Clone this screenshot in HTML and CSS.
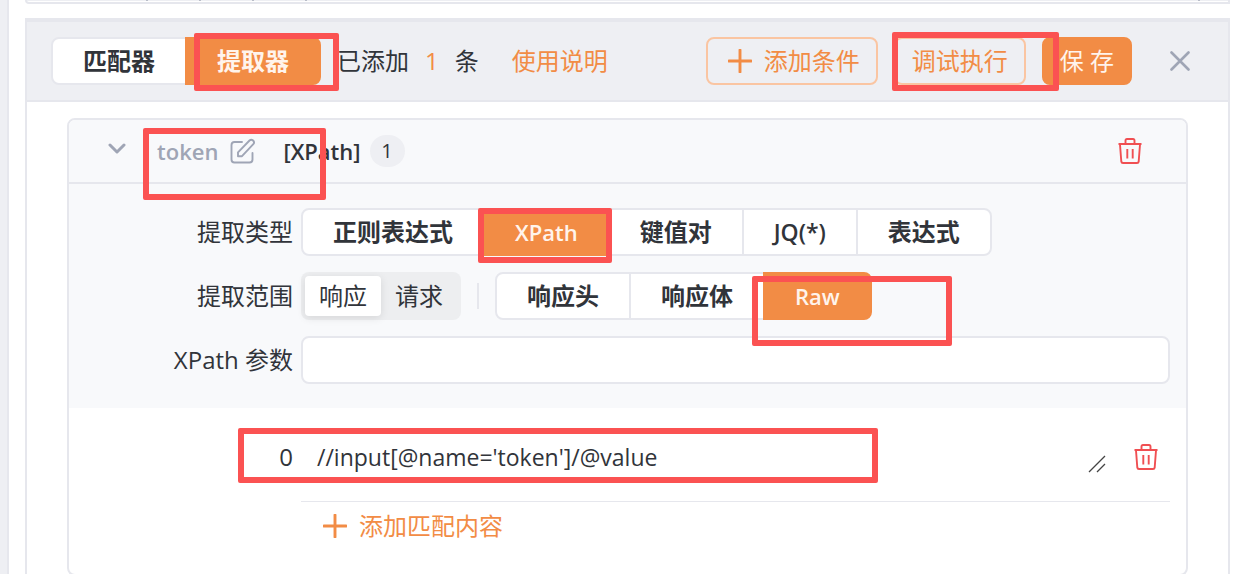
FILE: index.html
```html
<!DOCTYPE html>
<html lang="zh-CN">
<head>
<meta charset="utf-8">
<title>提取器</title>
<link rel="stylesheet" href="styles.css">
</head>
<body>
<svg class="sprite" aria-hidden="true">
  <symbol id="trash" viewBox="0 0 24 26"><path d="M7.5 5.5V2.6Q7.5 1 9 1h6q1.500 0 1.500 1.600v2.900M.5 6h23M2 6.500l1.300 17Q3.500 25 5 25h14q1.500 0 1.700-1.500L22 6.500M9.300 11v9.500M14.700 11v9.500" fill="none" stroke="currentColor" stroke-width="1.900"/></symbol>
  <symbol id="plus" viewBox="0 0 24 24"><path d="M12 1v22M1 12h22" fill="none" stroke="currentColor" stroke-width="2.900" stroke-linecap="round"/></symbol>
</svg>
<div class="page">
  <aside class="rail"></aside>
  <main class="main">
    <div class="previous"><i class="tick"></i><i class="tick"></i><i class="tick"></i><i class="tick"></i><i class="tick tick-last"></i></div>
    <section class="panel">
      <header class="toolbar">
        <div class="group">
          <button class="tab" type="button">匹配器</button>
          <button class="tab tab-on" type="button">提取器<span class="mark mark-tab"></span></button>
        </div>
        <div class="count"><span>已添加</span><span class="accent">1</span><span>条</span></div>
        <a class="help" href="#">使用说明</a>
        <div class="actions">
          <button class="btn" type="button"><span class="plus-box"><svg class="plus"><use href="#plus"/></svg></span>添加条件</button>
          <button class="btn" type="button">调试执行<span class="mark mark-debug"></span></button>
          <button class="btn btn-primary" type="button">保 存</button>
        </div>
        <button class="icon-btn close" type="button" aria-label="关闭"><svg class="close-icon" viewBox="0 0 20 20"><path d="M1.500 1.500l17 17M18.500 1.500l-17 17" fill="none" stroke="currentColor" stroke-width="2.600" stroke-linecap="round"/></svg></button>
      </header>
      <article class="card">
        <header class="card-head">
          <button class="icon-btn" type="button" aria-label="折叠"><svg class="chevron" viewBox="0 0 18 12"><path d="M2 2l7 7 7-7" fill="none" stroke="currentColor" stroke-width="3" stroke-linecap="round" stroke-linejoin="round"/></svg></button>
          <div class="name"><span>token</span>
            <button class="icon-btn" type="button" aria-label="编辑"><svg class="edit" viewBox="0 0 26 26"><path d="M12 4H4.500Q1.500 4 1.500 7v14.500q0 3 3 3h15q3 0 3-3V15M8 18.300v-4L19.500 2.500q1.700-1.600 3.600 0 1.800 2 .2 3.700L12 18.200z" fill="none" stroke="currentColor" stroke-width="1.900" stroke-linecap="round" stroke-linejoin="round"/></svg></button>
            <span class="mark mark-name"></span>
          </div>
          <span class="kind">[XPath]</span>
          <span class="badge">1</span>
          <button class="icon-btn danger head-del" type="button" aria-label="删除"><svg class="trash"><use href="#trash"/></svg></button>
        </header>
        <div class="settings">
          <div class="row">
            <span class="label">提取类型</span>
            <div class="group">
              <button class="tab" type="button">正则表达式</button>
              <button class="tab tab-on tab-latin" type="button">XPath<span class="mark mark-xpath"></span></button>
              <button class="tab" type="button">键值对</button>
              <button class="tab tab-jq" type="button">JQ(*)</button>
              <button class="tab" type="button">表达式</button>
            </div>
          </div>
          <div class="row">
            <span class="label">提取范围</span>
            <div class="segment">
              <button class="seg seg-on" type="button">响应</button>
              <button class="seg" type="button">请求</button>
            </div>
            <span class="divider"></span>
            <div class="group">
              <button class="tab" type="button">响应头</button>
              <button class="tab" type="button">响应体</button>
              <button class="tab tab-on tab-latin" type="button">Raw<span class="mark mark-raw"></span></button>
            </div>
          </div>
          <div class="row">
            <label class="label" for="params">XPath 参数</label>
            <input class="field" id="params" type="text">
          </div>
        </div>
        <div class="items">
          <div class="item">
            <label class="label" for="expr">0</label>
            <div class="item-body">
              <div class="expr-box">
                <textarea class="expr" id="expr" rows="1">//input[@name='token']/@value</textarea>
                <svg class="grip" viewBox="0 0 18 18"><path d="M1 17L17 1M9 17l8-8" fill="none" stroke="#444" stroke-width="1.300"/></svg>
              </div>
              <button class="icon-btn danger" type="button" aria-label="删除"><svg class="trash"><use href="#trash"/></svg></button>
            </div>
            <span class="mark mark-expr"></span>
          </div>
          <button class="add" type="button"><svg class="plus"><use href="#plus"/></svg>添加匹配内容</button>
        </div>
      </article>
    </section>
  </main>
</div>
</body>
</html>
```
FILE: styles.css
```css
* { box-sizing: border-box; }

:root {
  --orange: #f28c45;
  --line: #e6e7ed;
  --muted: #9fa5b5;
  --text: #31343a;
  --soft: #f8f9fb;
}

body {
  margin: 0;
  overflow: hidden;
  background: #fff;
  color: var(--text);
  font: 24px/32px "Open Sans", "Noto Sans CJK SC", sans-serif;
}

button, input, textarea { font: inherit; color: inherit; }
button { margin: 0; padding: 0; border: 0; background: none; white-space: nowrap; }
svg { display: block; }
.sprite { position: absolute; width: 0; height: 0; }

.page { display: flex; height: 100vh; }
.rail { flex: none; width: 9px; background: #eeeff3; border-right: 2px solid var(--line); }
.main { flex: 1; min-width: 0; padding: 0 22px 0 16px; }

.previous {
  display: flex;
  gap: 51px;
  height: 4px;
  margin-bottom: 14px;
  padding: 0 28px 0 119px;
  border: 2px solid var(--line);
  border-top: 0;
  border-radius: 0 0 0 8px;
  box-shadow: inset 0 1px #eeeff3;
}
.tick { width: 2px; height: 1px; background: #b9bdc8; }
.tick-last { margin-left: auto; }

.panel { border: 2px solid var(--line); border-top-width: 4px; padding-bottom: 16px; }

.toolbar {
  display: flex;
  align-items: center;
  height: 80px;
  padding: 0 38px 0 24px;
  background: #eeeff3;
  border-bottom: 2px solid var(--line);
}

.group { display: flex; }
.tab {
  position: relative;
  height: 48px;
  padding: 0 30px;
  background: #fff;
  border: 2px solid var(--line);
  font-weight: 700;
}
.tab + .tab { margin-left: -2px; }
.tab:first-child { border-radius: 8px 0 0 8px; }
.tab:last-child { border-radius: 0 8px 8px 0; }
.tab-on { z-index: 1; background: var(--orange); border-color: var(--orange); color: #fff4ec; }
.tab-latin { font-size: 22px; font-weight: 600; }
.tab-jq { font-size: 23px; font-weight: 600; }

.count { display: flex; gap: 16px; margin-left: 16px; }
.accent { color: var(--orange); }
.help { margin-left: 33px; color: var(--orange); text-decoration: none; }

.actions { display: flex; gap: 16px; margin-left: auto; }
.btn {
  position: relative;
  display: flex;
  align-items: center;
  gap: 8px;
  height: 48px;
  padding: 0 16px;
  border: 2px solid #fac5a2;
  border-radius: 8px;
  color: var(--orange);
}
.btn-primary { background: var(--orange); border-color: var(--orange); color: #fff4ec; }
.plus-box { display: flex; justify-content: center; width: 32px; }
.plus { width: 24px; height: 24px; }
.icon-btn { flex: none; color: var(--muted); }
.close { margin-left: 38px; }
.close-icon { width: 20px; height: 20px; }

.card {
  margin: 16px 40px 0;
  border: 2px solid var(--line);
  border-radius: 8px;
}
.card-head {
  display: flex;
  align-items: center;
  height: 64px;
  padding: 0 44px 0 39px;
  background: var(--soft);
  border-bottom: 2px solid var(--line);
  border-radius: 6px 6px 0 0;
}
.chevron { width: 18px; height: 12px; margin-bottom: 4px; }
.name {
  position: relative;
  display: flex;
  align-items: center;
  gap: 12px;
  margin-left: 31px;
  color: var(--muted);
  font-size: 22px;
  font-weight: 600;
}
.edit { width: 26px; height: 26px; }
.kind { margin-left: 27px; font-size: 22px; font-weight: 600; }
.badge {
  width: 35px;
  margin-left: 9px;
  border-radius: 16px;
  background: #eeeff3;
  font-size: 20px;
  text-align: center;
}
.head-del { margin-left: auto; }
.danger { color: #f04f52; }
.trash { width: 24px; height: 26px; }

.settings { display: grid; gap: 16px; padding: 24px 16px 24px 0; background: var(--soft); }
.row { display: flex; align-items: center; gap: 8px; }
.label { flex: none; width: 224px; text-align: right; }
.segment { display: flex; height: 48px; padding: 4px; border-radius: 8px; background: #edeef0; }
.seg { width: 76px; border-radius: 4px; }
.seg-on { background: #fff; box-shadow: 0 2px 8px rgba(0, 0, 0, .1); }
.divider { width: 2px; height: 26px; margin: 0 8px; background: var(--line); }
.field {
  flex: 1;
  min-width: 0;
  height: 48px;
  padding: 0 16px;
  background: #fff;
  border: 2px solid var(--line);
  border-radius: 8px;
}

.items { padding: 0 16px 24px 0; }
.item { position: relative; display: flex; gap: 8px; }
.item > .label { padding-top: 33px; }
.item-body {
  flex: 1;
  display: flex;
  align-items: center;
  gap: 28px;
  height: 94px;
  padding: 4px 12px 0 0;
  border-bottom: 1px solid var(--line);
}
.expr-box { position: relative; flex: 1; display: flex; }
.expr {
  width: 100%;
  height: 32px;
  padding: 0 16px;
  border: 0;
  background: none;
  font-size: 23px;
  resize: none;
  overflow: hidden;
}
.grip { position: absolute; right: 0; bottom: 0; width: 18px; height: 18px; }
.add { display: flex; align-items: center; gap: 12px; height: 48px; margin-left: 254px; color: var(--orange); }

.mark {
  position: absolute;
  z-index: 2;
  border: 6px solid #fb5252;
  border-radius: 2px;
  pointer-events: none;
}
.mark-tab { left: 7px; top: -6px; width: 145px; height: 58px; }
.mark-debug { left: -4px; top: -7px; width: 167px; height: 59px; }
.mark-name { left: -14px; top: -7px; width: 183px; height: 72px; }
.mark-xpath { left: -7px; top: -2px; width: 134px; height: 55px; }
.mark-raw { left: -13px; top: 2px; width: 200px; height: 70px; }
.mark-expr { left: 169px; top: 20px; width: 640px; height: 55px; }
```
